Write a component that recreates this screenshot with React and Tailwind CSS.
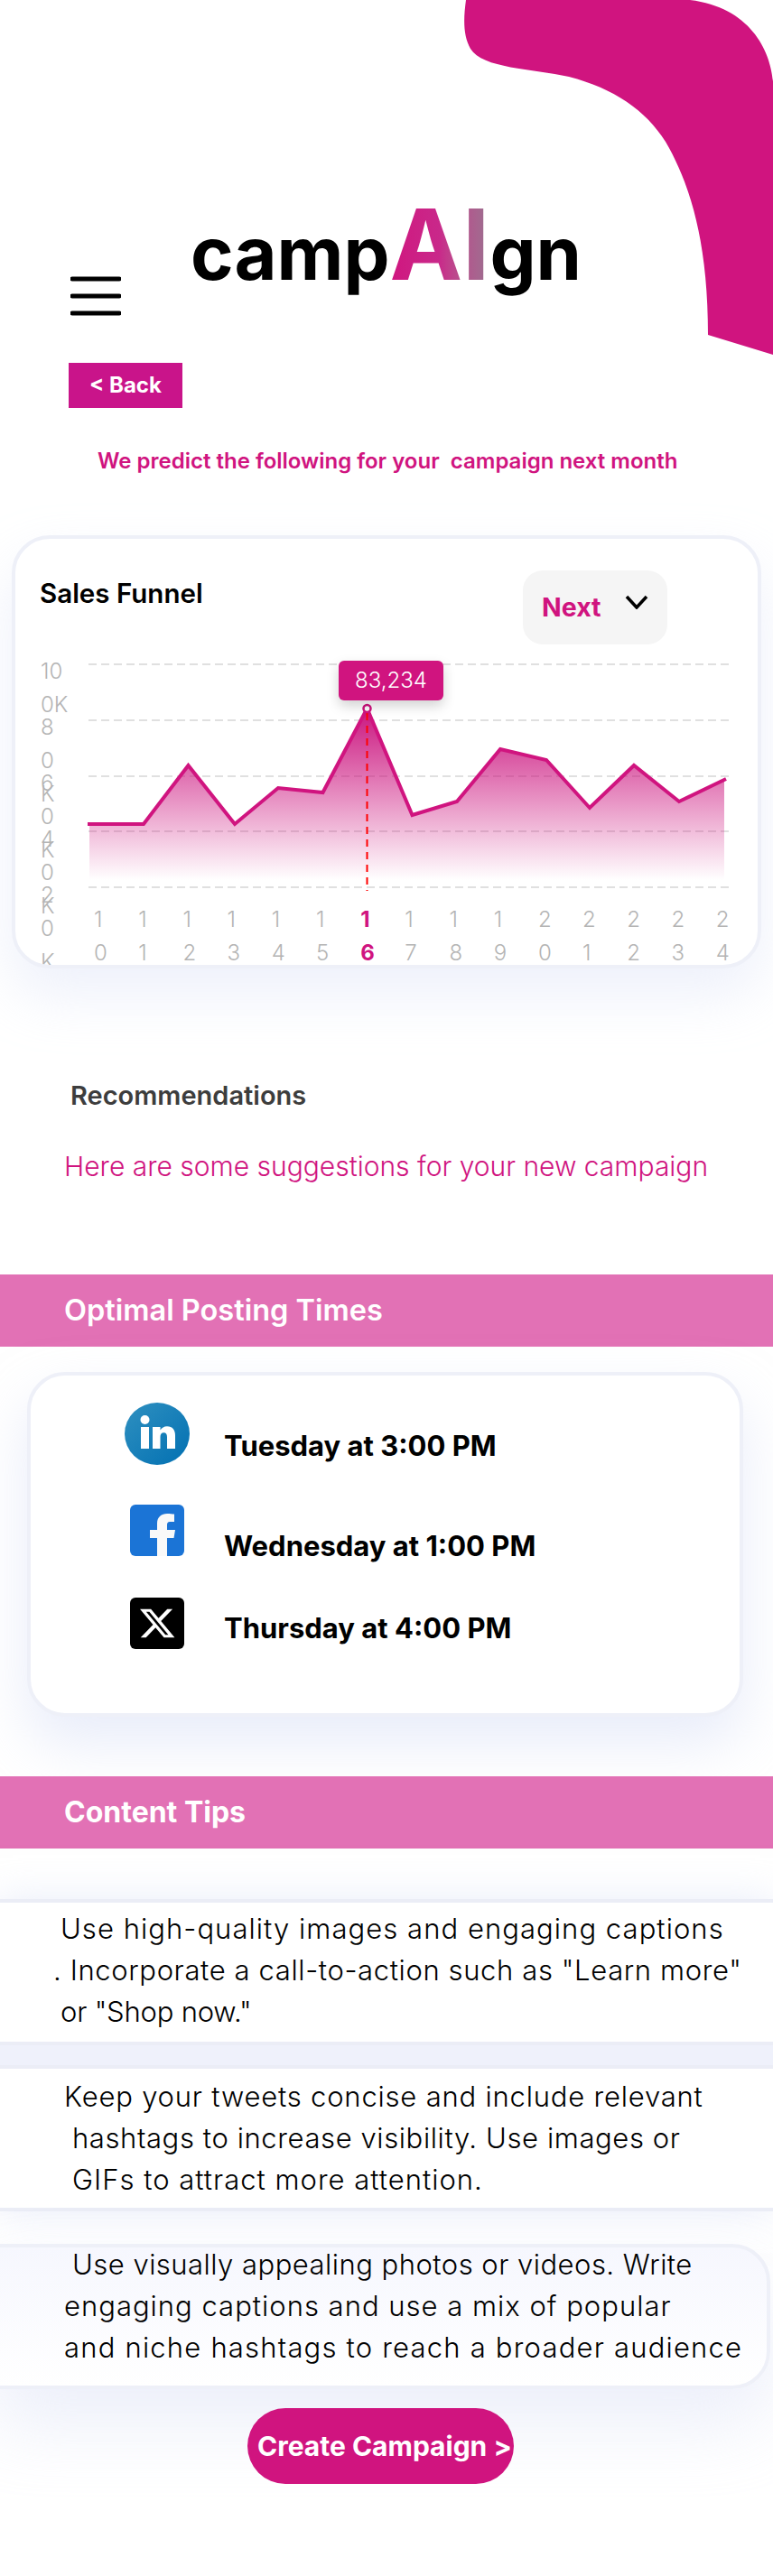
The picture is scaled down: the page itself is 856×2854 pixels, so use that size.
const points = [
  [97, 913], [159, 913], [208.5, 848], [260, 913], [308, 873], [357.5, 878], [406.5, 785], [456.5, 903],
  [506, 888], [554, 830], [605, 842], [653, 895], [702, 848], [752, 888], [804, 863],
];
const line = points.map((p) => p.join(",")).join(" ");
const gridLines = [736, 798, 860, 921, 983];
const yLabels = [["10", "0K"], ["8", "0", "K"], ["6", "0", "K"], ["4", "0", "K"], ["2", "0", "K"]];
const days = ["10", "11", "12", "13", "14", "15", "16", "17", "18", "19", "20", "21", "22", "23", "24"];

function Hamburger() {
  return (
    <svg width="56" height="46" viewBox="0 0 56 46">
      <path d="M2 5H54M2 24H54M2 43H54" stroke="#000" strokeWidth="5" strokeLinecap="round" />
    </svg>
  );
}

function Blob() {
  return (
    <svg className="absolute top-0 right-0" width="342" height="394" viewBox="514 0 342 394">
      <path
        d="M516 0C513 22 513 40 521 54C534 76 590 76 630 85C680 98 715 122 737 157C765 205 784 270 784 371L856 393V90C853 55 830 8 764 0Z"
        fill="#d0147f"
      />
    </svg>
  );
}

function Chart() {
  return (
    <svg width="740" height="275" viewBox="96 725 740 275">
      <defs>
        <linearGradient id="area" x1="0" y1="785" x2="0" y2="975" gradientUnits="userSpaceOnUse">
          <stop offset="0" stopColor="#c8107c" stopOpacity="0.98" />
          <stop offset="1" stopColor="#d0147f" stopOpacity="0" />
        </linearGradient>
      </defs>
      {gridLines.map((y) => (
        <line key={y} x1="98" x2="809" y1={y} y2={y} stroke="#e0e0e0" strokeWidth="2" strokeDasharray="9 5" />
      ))}
      <polygon points={`99,913 ${line} 802,863 802,975 99,975`} fill="url(#area)" />
      <polyline points={line} fill="none" stroke="#d0147f" strokeWidth="4" />
      <line x1="406.5" x2="406.5" y1="790" y2="987" stroke="#ff0000" strokeWidth="2" strokeDasharray="8 6" />
      <circle cx="406.5" cy="785" r="4" fill="#fff" stroke="#d0147f" strokeWidth="2.5" />
    </svg>
  );
}

function LinkedinIcon() {
  return (
    <svg width="72" height="69" viewBox="0 0 72 69">
      <defs>
        <linearGradient id="li" x1="0" y1="0" x2="1" y2="1">
          <stop offset="0" stopColor="#2f90c0" />
          <stop offset="1" stopColor="#0270b2" />
        </linearGradient>
      </defs>
      <ellipse cx="36" cy="34.5" rx="36" ry="34.5" fill="url(#li)" />
      <rect x="18" y="27" width="9" height="24" fill="#fff" />
      <circle cx="22.5" cy="19" r="5" fill="#fff" />
      <path d="M31 27h8.5v3.5c1.6-2.6 4.2-4.2 7.5-4.2 6 0 9 4 9 10.2V51h-9V38c0-3-1.2-4.8-3.6-4.8-2.6 0-3.9 1.9-3.9 4.8v13h-8.5Z" fill="#fff" />
    </svg>
  );
}

function FacebookIcon() {
  return (
    <svg width="60" height="57" viewBox="0 0 60 57">
      <rect width="60" height="57" rx="6" fill="#1b74d6" />
      <path d="M30 57V37H22V28H30V21C30 13.5 35 10 41 10C44 10 47 10.3 49 10.6V19H44C41.8 19 41 20.5 41 22.5V28H50L48.5 37H41V57Z" fill="#f9f9f9" />
    </svg>
  );
}

function XIcon() {
  return (
    <svg width="60" height="57" viewBox="0 0 60 57">
      <rect width="60" height="57" rx="6" fill="#000" />
      <g transform="translate(11 11) scale(1.6 1.46)">
        <path d="M18.901 1.153h3.68l-8.04 9.19L24 22.846h-7.406l-5.8-7.584-6.638 7.584H.474l8.6-9.83L0 1.154h7.594l5.243 6.932ZM17.61 20.644h2.039L6.486 3.24H4.298Z" fill="#fff" />
      </g>
    </svg>
  );
}

function TipLine({ className, children }) {
  return (
    <div className={`h-[46px] leading-[46px] text-[31px] font-light text-black whitespace-pre ${className}`}>
      {children}
    </div>
  );
}

export default function App() {
  return (
    <div className="relative w-[856px] h-[2854px] overflow-hidden bg-white font-[Inter,sans-serif]">
      <Blob />

      <div className="relative flex h-[402px] pl-[78px]">
        <div className="mt-[304px]">
          <Hamburger />
        </div>
        <div className="ml-[77px] mt-[206px] h-[130px] text-[81px] leading-[130px] font-bold text-black whitespace-nowrap">
          camp
          <span className="text-[108px] bg-gradient-to-r from-[#d0147f] via-[#c9288a] to-[#9a7090] bg-clip-text text-transparent">AI</span>
          gn
        </div>
      </div>

      <div className="relative ml-[76px] w-[126px] h-[50px] bg-[#c9148a] flex items-center justify-center text-[24px] font-bold text-white">
        &lt; Back
      </div>

      <div className="ml-[108px] mt-[43px] h-[32px] leading-[32px] text-[24px] font-semibold text-[#d0147f] whitespace-pre">
        We predict the following for your  campaign next month
      </div>

      <div className="relative mx-[13px] mt-[66px] h-[480px] rounded-[42px] border-[4px] border-[#eef0f8] bg-white overflow-hidden shadow-[0_30px_60px_rgba(212,220,245,0.4)]">
        <div className="flex justify-between pl-[27px] pr-[100px] pt-[35px] h-[128px]">
          <div className="mt-[9px] h-[32px] leading-[32px] text-[29.5px] font-semibold text-black">Sales Funnel</div>
          <div className="w-[160px] h-[82px] rounded-[22px] bg-[#f5f5f5] flex items-center pl-[21px] gap-[26px]">
            <span className="text-[28.5px] font-bold text-[#d0147f]">Next</span>
            <svg width="26" height="16" viewBox="0 0 26 16" className="-mt-[12px]">
              <path d="M2 2L13 14L24 2" fill="none" stroke="#000" strokeWidth="3.5" />
            </svg>
          </div>
        </div>
        <div className="flex">
          <div className="w-[79px] pl-[28px] shrink-0 text-[24px] font-light text-[#b4b4b4]">
            {yLabels.map((lines, i) => (
              <div key={i} className="h-[62px]">
                {lines.map((t, j) => (
                  <div key={j} className="h-[37px] leading-[37px]">{t}</div>
                ))}
              </div>
            ))}
          </div>
          <div className="relative">
            <Chart />
            <div className="absolute left-[279px] top-[7px] w-[116px] h-[44px] rounded-[6px] bg-[#d0147f] shadow-[0_6px_14px_rgba(0,0,0,0.18)] flex items-center justify-center text-[24px] font-light text-white">
              83,234
            </div>
            <div className="flex pl-[8px] text-[24px] font-light text-[#b4b4b4]">
              {days.map((d) => (
                <div key={d} className={`w-[49.2px] shrink-0 ${d === "16" ? "font-bold text-[#d0147f]" : ""}`}>
                  <div className="h-[37px] leading-[37px]">{d[0]}</div>
                  <div className="h-[37px] leading-[37px]">{d[1]}</div>
                </div>
              ))}
            </div>
          </div>
        </div>
      </div>

      <div className="relative ml-[78px] mt-[123px] h-[36px] leading-[36px] text-[29px] font-semibold text-[#3d3d3d]">
        Recommendations
      </div>
      <div className="relative ml-[71px] mt-[40px] h-[40px] leading-[40px] text-[30px] font-light text-[#d0147f]">
        Here are some suggestions for your new campaign
      </div>

      <div className="relative mt-[100px] h-[80px] bg-[#e271b5] flex items-center pl-[71px] text-[32.5px] font-semibold text-white">
        Optimal Posting Times
      </div>

      <div className="relative ml-[30px] mt-[28px] w-[793px] h-[382px] rounded-[42px] border-[4px] border-[#eef0f8] bg-white shadow-[0_30px_60px_rgba(212,220,245,0.5)] pl-[104px] pt-[30px]">
        <div className="flex h-[113px]">
          <div className="w-[72px] shrink-0"><LinkedinIcon /></div>
          <div className="ml-[38px] mt-[28px] leading-[40px] text-[31px] font-bold text-black">Tuesday at 3:00 PM</div>
        </div>
        <div className="flex h-[103px]">
          <div className="w-[72px] pl-[6px] shrink-0"><FacebookIcon /></div>
          <div className="ml-[38px] mt-[26px] leading-[40px] text-[31px] font-bold text-black">Wednesday at 1:00 PM</div>
        </div>
        <div className="flex">
          <div className="w-[72px] pl-[6px] shrink-0"><XIcon /></div>
          <div className="ml-[38px] mt-[14px] leading-[40px] text-[31px] font-bold text-black">Thursday at 4:00 PM</div>
        </div>
      </div>

      <div className="relative mt-[66px] h-[80px] bg-[#e271b5] flex items-center pl-[71px] text-[32px] font-bold text-white">
        Content Tips
      </div>

      <div className="relative mt-[56px] bg-[#eff1fb] flex flex-col gap-[22px] shadow-[0_0_40px_rgba(212,220,245,0.5)]">
        <div className="h-[162px] bg-white border-y-[4px] border-[#ebedf6] pt-[6px]">
          <TipLine className="pl-[67px] tracking-[1.05px]">Use high-quality images and engaging captions</TipLine>
          <TipLine className="pl-[59px] tracking-[0.62px]">. Incorporate a call-to-action such as "Learn more"</TipLine>
          <TipLine className="pl-[67px] tracking-[-0.2px]">or "Shop now."</TipLine>
        </div>
        <div className="h-[162px] bg-white border-y-[4px] border-[#ebedf6] pt-[8px]">
          <TipLine className="pl-[71px] tracking-[0.8px]">Keep your tweets concise and include relevant</TipLine>
          <TipLine className="pl-[80px] tracking-[0.6px]">hashtags to increase visibility. Use images or</TipLine>
          <TipLine className="pl-[80px] tracking-[1px]">GIFs to attract more attention.</TipLine>
        </div>
      </div>

      <div className="relative -ml-[10px] mt-[36px] w-[863px] h-[161px] rounded-r-[42px] border-[4px] border-[#eef0f8] bg-gradient-to-b from-[#f6f7fe] to-white shadow-[0_40px_80px_rgba(212,220,245,0.45)]">
        <div className="-mt-[4px]">
          <TipLine className="pl-[86px] tracking-[0.48px]">Use visually appealing photos or videos. Write</TipLine>
          <TipLine className="pl-[77px] tracking-[1px]">engaging captions and use a mix of popular</TipLine>
          <TipLine className="pl-[77px] tracking-[1.2px]">and niche hashtags to reach a broader audience</TipLine>
        </div>
      </div>

      <div className="relative ml-[274px] mt-[21px] w-[295px] h-[84px] rounded-full bg-[#d0147f] flex items-center pl-[11px] text-[30px] font-bold text-white whitespace-nowrap">
        Create Campaign &gt;
      </div>
    </div>
  );
}
